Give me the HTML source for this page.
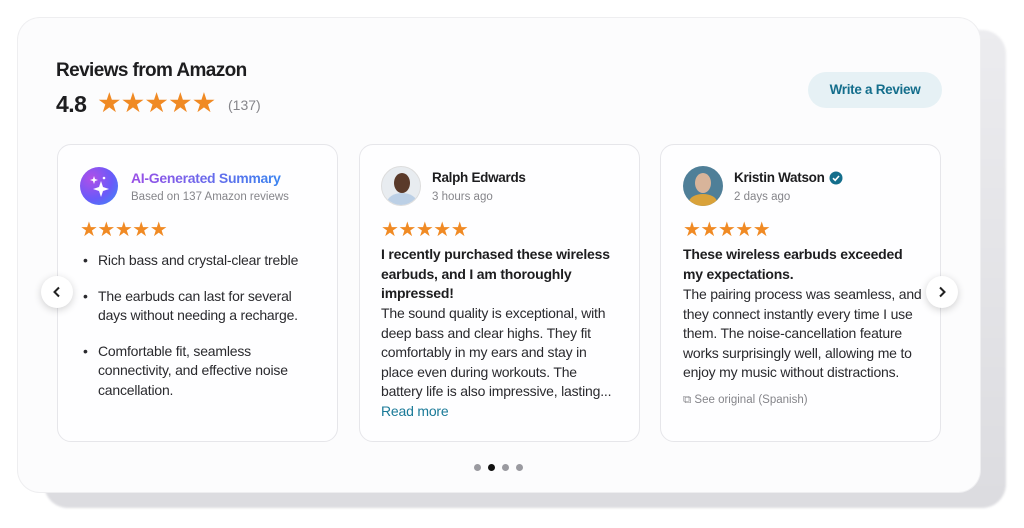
<!DOCTYPE html>
<html><head><meta charset="utf-8"><style>
*{margin:0;padding:0;box-sizing:border-box}
body{width:1024px;height:528px;background:#fff;font-family:"Liberation Sans",sans-serif;position:relative;overflow:hidden;color:#1d1d1f}
.shadow{position:absolute;left:44px;top:30px;width:962px;height:478px;border-radius:24px;background:linear-gradient(#ececef,#dcdce0);filter:blur(1px)}
.panel{position:absolute;left:18px;top:18px;width:962px;height:474px;border-radius:22px;background:#fcfcfd;box-shadow:0 0 0 1px #eeeef0}
.a{position:absolute;white-space:nowrap}
.card{position:absolute;top:144px;width:281px;height:298px;border:1px solid #e6e6ea;border-radius:14px;background:#fefeff}
.stars{position:absolute;color:#f08a24;letter-spacing:-0.5px}
.t{font-size:14px;line-height:19.5px;color:#2a2a2e;letter-spacing:-0.2px}
.b{font-weight:bold;color:#1d1d1f}
.arrow{position:absolute;width:32px;height:32px;border-radius:50%;background:#fff;box-shadow:0 2px 8px rgba(0,0,0,.18);display:flex;align-items:center;justify-content:center}
.dot{position:absolute;top:464px;width:7px;height:7px;border-radius:50%;background:#9a9aa0}
</style></head><body>
<div class="shadow"></div>
<div class="panel"></div>
<div class="a b" style="left:56px;top:60px;font-size:19px;letter-spacing:-0.6px">Reviews from Amazon</div>
<div class="a b" style="left:56px;top:91px;font-size:23px;letter-spacing:-0.5px">4.8</div>
<div class="stars" style="left:97px;top:87px;font-size:27.5px;letter-spacing:-1px">★★★★★</div>
<div class="a" style="left:228px;top:97px;font-size:14px;color:#85858a">(137)</div>
<div class="a" style="left:808px;top:72px;width:134px;height:36px;border-radius:18px;background:#e6f1f5;color:#146e8c;font-weight:bold;font-size:13.5px;text-align:center;line-height:36px;letter-spacing:-0.3px">Write a Review</div>

<div class="card" style="left:57px">
  <div class="a" style="left:22px;top:22px;width:38px;height:38px;border-radius:50%;background:radial-gradient(circle at 30% 30%,#b04fe8,#6a5af9 55%,#3a8ef6)">
    <svg width="38" height="38" viewBox="0 0 38 38"><path d="M21 14 L23 20 L29 22 L23 24 L21 30 L19 24 L13 22 L19 20Z" fill="#fff"/><path d="M14 9 L15 12 L18 13 L15 14 L14 17 L13 14 L10 13 L13 12Z" fill="#fff"/><circle cx="24" cy="11" r="1.3" fill="#fff"/></svg>
  </div>
  <div class="a" style="left:73px;top:25px;font-size:14px;font-weight:bold;background:linear-gradient(90deg,#9a4ee6,#3a84f0);-webkit-background-clip:text;color:transparent;letter-spacing:-0.3px">AI-Generated Summary</div>
  <div class="a" style="left:73px;top:46px;font-size:11.5px;color:#85858a">Based on 137 Amazon reviews</div>
  <div class="stars" style="left:22px;top:72px;font-size:20px">★★★★★</div>
  <div class="a t" style="left:22px;top:106px;white-space:normal;width:226px">
    <div style="position:relative;padding-left:18px"><span style="position:absolute;left:3px">•</span>Rich bass and crystal-clear treble</div>
    <div style="position:relative;padding-left:18px;margin-top:16px"><span style="position:absolute;left:3px">•</span>The earbuds can last for several days without needing a recharge.</div>
    <div style="position:relative;padding-left:18px;margin-top:16px"><span style="position:absolute;left:3px">•</span>Comfortable fit, seamless connectivity, and effective noise cancellation.</div>
  </div>
</div>

<div class="card" style="left:359px">
  <div class="a" style="left:21px;top:21px;width:40px;height:40px;border-radius:50%;background:#e8ecf0;overflow:hidden;border:1px solid #ddd">
    <div style="position:absolute;left:12px;top:6px;width:16px;height:20px;border-radius:50%;background:#5a3a2a"></div>
    <div style="position:absolute;left:5px;top:26px;width:30px;height:20px;border-radius:50% 50% 0 0;background:#bcd0e6"></div>
  </div>
  <div class="a b" style="left:72px;top:25px;font-size:13.5px;letter-spacing:-0.3px">Ralph Edwards</div>
  <div class="a" style="left:72px;top:46px;font-size:11.5px;color:#85858a">3 hours ago</div>
  <div class="stars" style="left:21px;top:72px;font-size:20px">★★★★★</div>
  <div class="a t b" style="left:21px;top:100px;white-space:normal;width:240px">I recently purchased these wireless earbuds, and I am thoroughly impressed!</div>
  <div class="a t" style="left:21px;top:159px;white-space:normal;width:236px">The sound quality is exceptional, with deep bass and clear highs. They fit comfortably in my ears and stay in place even during workouts. The battery life is also impressive, lasting...<br><span style="color:#1a7a98">Read more</span></div>
</div>

<div class="card" style="left:660px">
  <div class="a" style="left:22px;top:21px;width:40px;height:40px;border-radius:50%;background:#4f7f98;overflow:hidden">
    <div style="position:absolute;left:12px;top:7px;width:16px;height:20px;border-radius:50%;background:#d8b49a"></div>
    <div style="position:absolute;left:6px;top:28px;width:28px;height:16px;border-radius:50% 50% 0 0;background:#d9a23a"></div>
  </div>
  <div class="a b" style="left:73px;top:25px;font-size:13.5px;letter-spacing:-0.3px">Kristin Watson</div>
  <svg class="a" style="left:168px;top:26px" width="14" height="14" viewBox="0 0 14 14"><circle cx="7" cy="7" r="6.5" fill="#146e8c"/><path d="M4 7.2 L6.2 9.3 L10 5" stroke="#fff" stroke-width="1.6" fill="none"/></svg>
  <div class="a" style="left:73px;top:46px;font-size:11.5px;color:#85858a">2 days ago</div>
  <div class="stars" style="left:22px;top:72px;font-size:20px">★★★★★</div>
  <div class="a t b" style="left:22px;top:100px;white-space:normal;width:236px">These wireless earbuds exceeded my expectations.</div>
  <div class="a t" style="left:22px;top:140px;white-space:normal;width:242px">The pairing process was seamless, and they connect instantly every time I use them. The noise-cancellation feature works surprisingly well, allowing me to enjoy my music without distractions.</div>
  <div class="a" style="left:22px;top:249px;font-size:11.5px;color:#85858a">⧉ See original (Spanish)</div>
</div>

<div class="arrow" style="left:41px;top:276px"><svg width="12" height="12" viewBox="0 0 12 12"><path d="M8 1.5 L3.5 6 L8 10.5" stroke="#222" stroke-width="2" fill="none"/></svg></div>
<div class="arrow" style="left:926px;top:276px"><svg width="12" height="12" viewBox="0 0 12 12"><path d="M4 1.5 L8.5 6 L4 10.5" stroke="#222" stroke-width="2" fill="none"/></svg></div>

<div class="dot" style="left:474px"></div>
<div class="dot" style="left:488px;background:#111"></div>
<div class="dot" style="left:502px"></div>
<div class="dot" style="left:516px"></div>
</body></html>
